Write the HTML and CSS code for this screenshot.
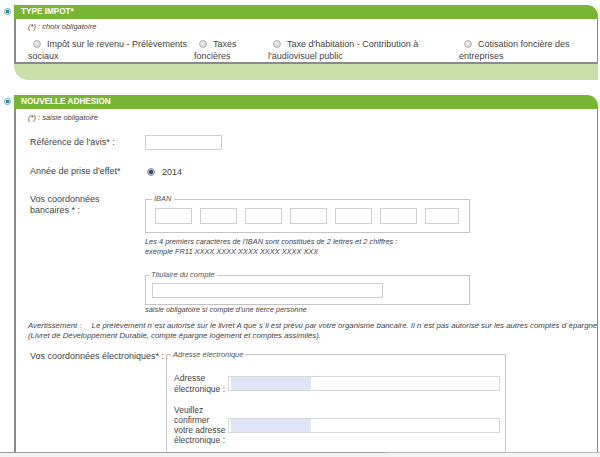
FILE: index.html
```html
<!DOCTYPE html>
<html>
<head>
  <title>Adhésion au prélèvement</title>
  <link rel="stylesheet" href="styles.css">
</head>
<body>
  <div class="page">
    <div class="block">
      <span class="toggle"></span>
      <div class="panel">
        <div class="panel-head">TYPE IMPOT*</div>
        <div class="panel-body type-body">
          <p class="note">(*) : choix obligatoire</p>
          <div class="choices">
            <label class="choice"><span class="radio"></span>Impôt sur le revenu - Prélèvements sociaux</label>
            <label class="choice"><span class="radio"></span>Taxes foncières</label>
            <label class="choice"><span class="radio"></span>Taxe d'habitation - Contribution à l'audiovisuel public</label>
            <label class="choice"><span class="radio"></span>Cotisation foncière des entreprises</label>
          </div>
        </div>
        <div class="panel-foot"></div>
      </div>
    </div>

    <div class="block">
      <span class="toggle"></span>
      <div class="panel">
        <div class="panel-head">NOUVELLE ADHESION</div>
        <div class="panel-body form-body">
          <p class="note">(*) : saisie obligatoire</p>

          <div class="row row-ref">
            <span class="label">Référence de l'avis* :</span>
            <input type="text" class="field ref-field">
          </div>

          <div class="row row-year">
            <span class="label">Année de prise d'effet*</span>
            <span class="year"><span class="radio checked"></span>2014</span>
          </div>

          <div class="row row-bank">
            <span class="label bank-label">Vos coordonnées bancaires * :</span>
            <div class="bank">
              <fieldset class="box iban">
                <legend>IBAN</legend>
                <div class="iban-parts">
                  <input type="text" class="field part">
                  <input type="text" class="field part">
                  <input type="text" class="field part">
                  <input type="text" class="field part">
                  <input type="text" class="field part">
                  <input type="text" class="field part">
                  <input type="text" class="field part last">
                </div>
              </fieldset>
              <p class="hint hint-iban">Les 4 premiers caractères de l'IBAN sont constitués de 2 lettres et 2 chiffres :<br>exemple FR11 XXXX XXXX XXXX XXXX XXXX XXX</p>
              <fieldset class="box holder">
                <legend>Titulaire du compte</legend>
                <input type="text" class="field holder-field">
              </fieldset>
              <p class="hint">saisie obligatoire si compte d'une tierce personne</p>
            </div>
          </div>

          <p class="warning"><span class="warn-title">Avertissement :</span>Le prélèvement n´est autorisé sur le livret A que s´il est prévu par votre organisme bancaire. Il n´est pas autorisé sur les autres comptes d´épargne<br>(Livret de Développement Durable, compte épargne logement et comptes assimilés).</p>

          <div class="row row-mail">
            <span class="label">Vos coordonnées électroniques* :</span>
            <fieldset class="box mail">
              <legend>Adresse électronique</legend>
              <div class="mail-grid">
                <span class="mail-label">Adresse électronique :</span>
                <input type="text" class="field mail-field">
                <span class="mail-label confirm">Veuillez confirmer votre adresse électronique :</span>
                <input type="text" class="field mail-field">
              </div>
            </fieldset>
          </div>
        </div>
      </div>
    </div>
  </div>
  <div class="bottom-bar"><span class="bar-left"></span></div>
</body>
</html>
```

FILE: styles.css
```css
html, body {
  height: 100%;
}

body {
  margin: 0;
  display: flex;
  flex-direction: column;
  font-family: "Liberation Sans", Arial, sans-serif;
  font-size: 9px;
  color: #444;
  overflow: hidden;
}

.page {
  flex: 1;
  overflow: hidden;
  padding-top: 5px;
}

p {
  margin: 0;
}

.block {
  display: flex;
  gap: 3px;
  padding: 0 2px 0 4px;
  margin-bottom: 15px;
}

.toggle {
  flex: none;
  width: 7px;
  height: 7px;
  margin-top: 3px;
  box-sizing: border-box;
  border-radius: 50%;
  border: 1px solid #5fa3b8;
  background: radial-gradient(circle, #2e7f95 0 1.6px, #fff 2px);
}

.panel {
  flex: 1;
  min-width: 0;
}

.panel-head {
  height: 14px;
  line-height: 14px;
  padding-left: 7px;
  background: #79b535;
  color: #fff;
  font-weight: bold;
  font-size: 8.2px;
  border-top-right-radius: 11px;
}

.panel-body {
  background: #fff;
  border-left: 2px solid #8a8a8a;
  border-right: 1px solid #8a8a8a;
  padding-left: 12px;
}

.type-body {
  border-bottom: 2px solid #8a8a8a;
  padding-top: 3px;
}

.panel-foot {
  height: 16px;
  background: #c7e1a8;
  border-bottom-left-radius: 14px;
}

.note {
  font-style: italic;
  font-size: 7.5px;
  line-height: 10px;
}

.choices {
  display: grid;
  grid-template-columns: 166px 74px 191px 1fr;
  margin-top: 6px;
  line-height: 12px;
}

.choice {
  padding-right: 6px;
}

.radio {
  display: inline-block;
  width: 8px;
  height: 8px;
  box-sizing: border-box;
  border-radius: 50%;
  border: 1px solid #b4b4b4;
  background: radial-gradient(circle at 40% 40%, #f2f2f2, #c8c8c8);
  margin: 0 6px 0 5px;
  vertical-align: -1px;
}

.radio.checked {
  border-color: #8f8f8f;
  background: radial-gradient(circle, #2c4f7a 0 1.8px, #9eb0c4 2.4px, #e8e8e8 3px);
}

.form-body {
  padding-top: 4px;
  min-height: 400px;
}

.row {
  display: grid;
  grid-template-columns: 115px 1fr;
  padding-left: 2px;
}

.label {
  line-height: 11px;
}

.bank-label {
  max-width: 96px;
}

.row-ref {
  margin-top: 12px;
  align-items: center;
}

.field {
  margin: 0;
  padding: 0;
  box-sizing: border-box;
  border: 1px solid #cfcfcf;
  background: #fff;
  height: 15px;
  font: inherit;
}

.ref-field {
  width: 77px;
}

.row-year {
  margin-top: 16px;
  line-height: 12px;
}

.year .radio {
  margin: 0 7px 0 2px;
}

.row-bank {
  margin-top: 16px;
}

.box {
  margin: 0;
  border: 1px solid #c4c4c4;
  padding: 0 8px 8px 9px;
}

.box legend {
  font-style: italic;
  font-size: 7.5px;
  line-height: 10px;
  color: #555;
  padding: 0 2px;
  margin-left: -3px;
}

.iban {
  width: 325px;
  box-sizing: border-box;
  padding-top: 4px;
}

.iban-parts {
  display: flex;
  gap: 8px;
}

.part {
  width: 37px;
  height: 16px;
}

.part.last {
  width: 34px;
}

.hint {
  font-style: italic;
  font-size: 7.4px;
  line-height: 9.5px;
}

.hint-iban {
  margin: 4px 0 14px;
}

.holder {
  width: 325px;
  box-sizing: border-box;
  padding: 3px 8px 6px 6px;
}

.holder-field {
  width: 231px;
}

.warning {
  margin-top: 6px;
  font-style: italic;
  font-size: 7.8px;
  line-height: 10px;
  white-space: nowrap;
}

.warn-title {
  margin-right: 10px;
}

.row-mail {
  grid-template-columns: 136px 1fr;
  margin-top: 9px;
}

.row-mail .label {
  padding-top: 1px;
}

.mail {
  width: 340px;
  box-sizing: border-box;
  padding: 13px 5px 10px 7px;
}

.mail-grid {
  display: grid;
  grid-template-columns: 54px 1fr;
  row-gap: 10px;
  align-items: center;
}

.mail-label {
  font-size: 8.5px;
  line-height: 11px;
}

.mail-label.confirm {
  line-height: 10.3px;
}

.mail-field {
  width: 272px;
  border-color: #d6d6d6;
  background: linear-gradient(to right, #fff 0 2px, #dfe4f6 2px 82px, #fff 82px);
}

.bottom-bar {
  flex: none;
  height: 4px;
  display: flex;
  border-top: 1px solid #b9b9b9;
  background: #f3f3f3;
}

.bar-left {
  width: 385px;
  border-top: 1px solid #9a9a9a;
  margin-top: -1px;
}
```
